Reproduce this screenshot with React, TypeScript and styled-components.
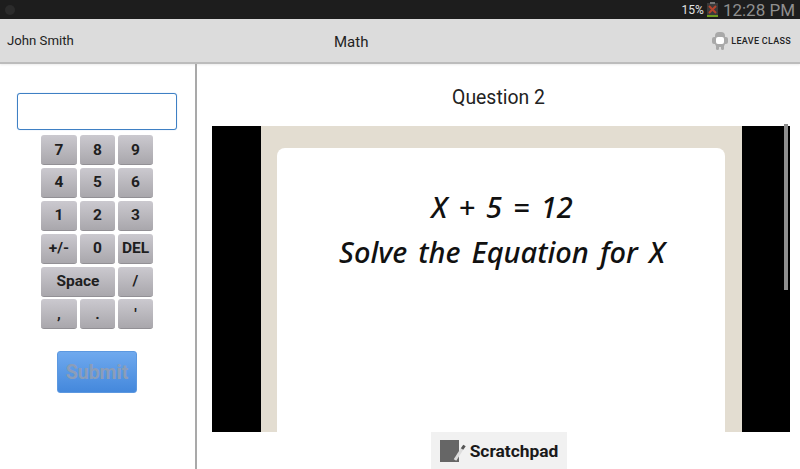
import { createGlobalStyle, styled } from 'styled-components';

const Global = createGlobalStyle`
  html, body { margin: 0; padding: 0; background: #fff; }
  body { font-family: "Roboto", "Liberation Sans", sans-serif; overflow: hidden; }
`;

const KEY_ROWS = [
  ['7', '8', '9'],
  ['4', '5', '6'],
  ['1', '2', '3'],
  ['+/-', '0', 'DEL'],
  ['Space', '/'],
  [',', '.', "'"],
];

export default function App() {
  return (
    <Screen>
      <Global />
      <StatusBar>
        <Dot />
        <StatusRight>
          <Battery>15%</Battery>
          <BatteryIcon width="13" height="15" viewBox="0 0 13 15">
            <rect x="1" y="1" width="11" height="14" fill="#3a3a3a" />
            <rect x="4" y="0" width="5" height="2" fill="#777" />
            <rect x="1" y="13" width="11" height="2" fill="#6f9a1f" />
            <path d="M3 4l7 7M10 4l-7 7" stroke="#b5432c" strokeWidth="2" />
          </BatteryIcon>
          <Clock>12:28 PM</Clock>
        </StatusRight>
      </StatusBar>
      <Header>
        <UserName>John Smith</UserName>
        <ClassName>Math</ClassName>
        <LeaveButton>
          <svg width="16" height="18" viewBox="0 0 16 18">
            <rect x="3" y="0" width="10" height="15" rx="4" fill="#a9a9a9" />
            <rect x="0" y="5" width="16" height="7" rx="2" fill="#a9a9a9" />
            <rect x="4" y="12" width="3" height="6" rx="1.5" fill="#a9a9a9" />
            <rect x="9" y="12" width="3" height="6" rx="1.5" fill="#a9a9a9" />
            <rect x="4" y="5" width="8" height="7" rx="2" fill="#fff" />
          </svg>
          <span>LEAVE CLASS</span>
        </LeaveButton>
      </Header>
      <Body>
        <Sidebar>
          <AnswerInput />
          <Keypad>
            {KEY_ROWS.flat().map((k) => (
              <Key key={k} $wide={k === 'Space'}>
                {k}
              </Key>
            ))}
          </Keypad>
          <Submit>Submit</Submit>
        </Sidebar>
        <Main>
          <Question>Question 2</Question>
          <Stage>
            <Frame>
              <Card>
                <Equation>X + 5 = 12</Equation>
                <Equation>Solve the Equation for X</Equation>
              </Card>
            </Frame>
          </Stage>
          <ScrollThumb />
          <Scratchpad>
            <svg width="26" height="22" viewBox="0 0 26 22">
              <rect x="0" y="0" width="19" height="22" fill="#666" />
              <path d="M15 20l7-11" stroke="#dcdcdc" strokeWidth="3" />
              <path d="M22 9l2.5-3.5" stroke="#555" strokeWidth="3" />
            </svg>
            Scratchpad
          </Scratchpad>
        </Main>
      </Body>
    </Screen>
  );
}

const Screen = styled.div`
  width: 800px;
  height: 469px;
  display: flex;
  flex-direction: column;
  overflow: hidden;
`;

const StatusBar = styled.div`
  height: 19px;
  background: #1d1d1d;
  display: flex;
  align-items: center;
  justify-content: space-between;
  padding: 0 5px;
  flex: none;
`;

const Dot = styled.div`
  width: 10px;
  height: 10px;
  border-radius: 50%;
  background: #2b2b2b;
`;

const StatusRight = styled.div`
  display: flex;
  align-items: center;
`;

const Battery = styled.span`
  color: #e4e4e4;
  font-size: 12px;
  margin-right: 2px;
`;

const BatteryIcon = styled.svg`
  margin-right: 4px;
`;

const Clock = styled.span`
  color: #8f8f8f;
  font-size: 17px;
`;

const Header = styled.div`
  height: 45px;
  flex: none;
  box-sizing: border-box;
  background: #dcdcdc;
  border-bottom: 2px solid #bcbcbc;
  box-shadow: 0 1px 2px rgba(0, 0, 0, 0.08);
  position: relative;
  display: flex;
  align-items: center;
  padding: 0 9px 0 7px;
  color: #222;
`;

const UserName = styled.div`
  font-size: 13.2px;
  width: 327px;
`;

const ClassName = styled.div`
  font-size: 15px;
  padding-top: 3px;
`;

const LeaveButton = styled.div`
  margin-left: auto;
  display: flex;
  align-items: center;
  gap: 3px;
  font-size: 9px;
  font-weight: 500;
  letter-spacing: 0.3px;
`;

const Body = styled.div`
  flex: 1;
  display: flex;
  min-height: 0;
`;

const Sidebar = styled.div`
  width: 195px;
  flex: none;
  box-sizing: border-box;
  display: flex;
  flex-direction: column;
  align-items: center;
  padding: 29px 1px 0 0;
`;

const AnswerInput = styled.div`
  width: 160px;
  height: 37px;
  box-sizing: border-box;
  background: #fff;
  border: 1px solid #3f80c4;
  border-radius: 3px;
  box-shadow: 0 0 1px #8ab8e6;
`;

const Keypad = styled.div`
  margin-top: 5px;
  width: 112px;
  display: grid;
  grid-template-columns: 36px 35px 35px;
  grid-auto-rows: 30px;
  gap: 2.88px 3px;
`;

const Key = styled.div<{ $wide?: boolean }>`
  grid-column: ${(p) => (p.$wide ? 'span 2' : 'auto')};
  background: linear-gradient(#cbc9cf, #a9a7ac);
  border-radius: 3px;
  border-bottom: 1px solid #929095;
  box-sizing: border-box;
  display: flex;
  align-items: center;
  justify-content: center;
  font-size: 15.5px;
  font-weight: 700;
  color: #1f1f1f;
`;

const Submit = styled.div`
  margin-top: 22px;
  width: 80px;
  height: 42px;
  box-sizing: border-box;
  background: linear-gradient(#6fa9ee, #4488dc);
  border: 1px solid #5c98e0;
  border-radius: 3px;
  color: #8b9db8;
  font-size: 19.5px;
  font-weight: 700;
  display: flex;
  align-items: center;
  justify-content: center;
`;

const Main = styled.div`
  flex: 1;
  min-width: 0;
  display: flex;
  flex-direction: column;
  align-items: center;
  padding: 0 10px 0 15px;
  border-left: 2px solid #a9a9a9;
  position: relative;
`;

const Question = styled.div`
  height: 62px;
  flex: none;
  box-sizing: border-box;
  padding: 22px 5px 0 0;
  font-size: 19.4px;
  color: #222;
`;

const Stage = styled.div`
  align-self: stretch;
  height: 306px;
  flex: none;
  background: #000;
  display: flex;
  justify-content: center;
  overflow: hidden;
`;

const Frame = styled.div`
  width: 481px;
  height: 100%;
  box-sizing: border-box;
  background: #e3ddd1;
  padding: 22px 17px 0 16px;
`;

const Card = styled.div`
  height: 320px;
  background: #fff;
  border-radius: 8px 8px 0 0;
  padding: 36px 0 0 3px;
  text-align: center;
`;

const Equation = styled.div`
  font-family: "Noto Sans", sans-serif;
  font-style: italic;
  font-weight: 500;
  font-size: 29px;
  word-spacing: 3.5px;
  line-height: 45px;
  color: #111;
`;

const ScrollThumb = styled.div`
  position: absolute;
  right: 12px;
  top: 60px;
  width: 4px;
  height: 166px;
  background: #8e8e8e;
`;

const Scratchpad = styled.div`
  height: 38px;
  width: 136px;
  flex: none;
  box-sizing: border-box;
  margin-right: 4px;
  background: #f1f1f1;
  display: flex;
  align-items: center;
  justify-content: center;
  gap: 4px;
  font-size: 17.4px;
  font-weight: 700;
  color: #1a1a1a;
`;
